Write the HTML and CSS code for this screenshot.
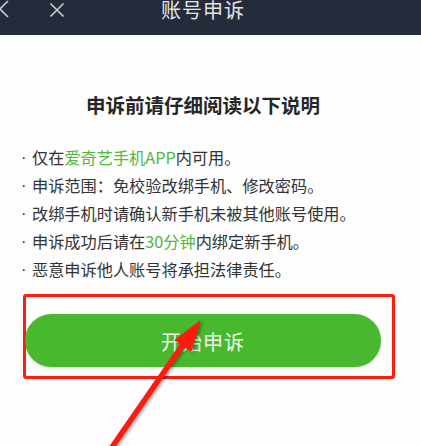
FILE: index.html
```html
<!DOCTYPE html>
<html lang="zh-CN">
<head>
<meta charset="utf-8">
<title>账号申诉</title>
<link rel="stylesheet" href="styles.css">
</head>
<body>
<header class="topbar">
  <div class="nav-left">
    <svg class="icon-back" width="12" height="20" viewBox="0 0 12 20"><polyline points="9,2 1,10 9,18" fill="none" stroke="#c9ccd2" stroke-width="1.6"/></svg>
    <svg class="icon-close" width="16" height="16" viewBox="0 0 16 16"><path d="M1.5 1.5 L14.5 14.5 M14.5 1.5 L1.5 14.5" fill="none" stroke="#c9ccd2" stroke-width="1.6"/></svg>
  </div>
  <h1 class="topbar-title">账号申诉</h1>
  <div class="nav-right"></div>
</header>
<main class="content">
  <h2 class="notice-title">申诉前请仔细阅读以下说明</h2>
  <ul class="rules">
    <li>仅在<span class="hl">爱奇艺手机APP</span>内可用。</li>
    <li>申诉范围：免校验改绑手机、修改密码。</li>
    <li>改绑手机时请确认新手机未被其他账号使用。</li>
    <li>申诉成功后请在<span class="hl">30分钟</span>内绑定新手机。</li>
    <li>恶意申诉他人账号将承担法律责任。</li>
  </ul>
  <div class="highlight-box">
    <button class="start-btn">开始申诉</button>
  </div>
</main>
<svg class="annotation-arrow" width="421" height="446" viewBox="0 0 421 446">
  <g fill="#ff1a10" stroke="#ff1a10" class="arrow-shape">
    <line x1="184" y1="343" x2="110" y2="450" stroke-width="5.5"/>
    <polygon points="200,321 191,351 175,340" stroke-width="1"/>
  </g>
</svg>
</body>
</html>
```
FILE: styles.css
```css
html, body {
  margin: 0;
  padding: 0;
  background: #fdfdfd;
  font-family: "Noto Sans CJK SC", "Noto Sans", sans-serif;
  width: 421px;
  height: 446px;
  overflow: hidden;
}

.topbar {
  height: 35px;
  box-sizing: border-box;
  padding: 0 15px 15px 0;
  background: #242b3a;
  display: grid;
  grid-template-columns: 1fr auto 1fr;
  align-items: center;
}

.nav-left {
  display: flex;
  align-items: center;
  gap: 38px;
  margin-left: -1px;
  margin-top: -3px;
}

.icon-back, .icon-close {
  display: block;
}

.icon-close {
  margin-top: 2px;
}

.topbar-title {
  margin: 0;
  font-size: 20px;
  line-height: 20px;
  font-weight: 400;
  color: #e4e4e6;
  letter-spacing: 1px;
}

.content {
  padding: 0 15px 0 0;
}

.notice-title {
  margin: 56px 0 0;
  text-align: center;
  font-size: 19.5px;
  line-height: 28px;
  font-weight: 700;
  color: #262626;
}

.rules {
  list-style: none;
  margin: 24px 0 0;
  padding: 0 0 0 21px;
  font-size: 16.2px;
  line-height: 28px;
  color: #333;
}

.rules li {
  display: flex;
  white-space: nowrap;
}

.rules li::before {
  content: "·";
  font-family: "Liberation Sans", sans-serif;
  width: 11px;
  flex: none;
}

.hl {
  color: #52b83e;
}

.highlight-box {
  margin: 11px 0 0 23px;
  width: 372px;
  box-sizing: border-box;
  border: 3px solid #ff1d10;
  border-radius: 3px;
  padding: 17px 10px 9px 0;
}

.start-btn {
  display: block;
  width: 100%;
  height: 53px;
  margin-left: -1px;
  border: none;
  border-radius: 27px;
  background: #48b92f;
  box-shadow: 0 1px 3px rgba(0, 0, 0, 0.18);
  color: #eef6ea;
  font-family: "Noto Sans CJK SC", "Noto Sans", sans-serif;
  font-size: 20px;
  letter-spacing: 1px;
  padding-top: 3px;
}

.annotation-arrow {
  position: absolute;
  left: 0;
  top: 0;
  pointer-events: none;
}

.arrow-shape {
  filter: drop-shadow(2px 1px 1.5px rgba(0, 0, 0, 0.35));
}
```
